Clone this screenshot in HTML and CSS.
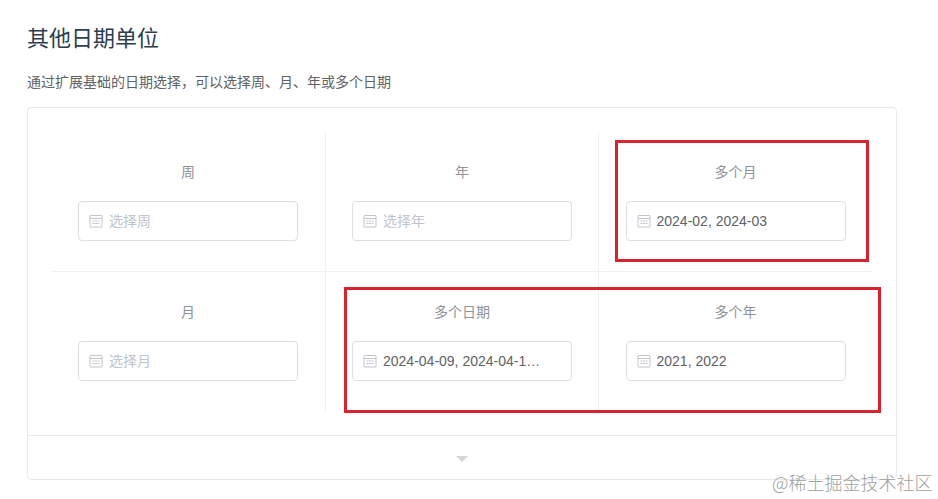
FILE: index.html
```html
<!DOCTYPE html>
<html lang="zh-CN">
<head>
<meta charset="utf-8">
<title>其他日期单位</title>
<link rel="stylesheet" href="styles.css">
</head>
<body>
<svg class="defs" width="0" height="0" aria-hidden="true">
  <symbol id="cal" viewBox="0 0 14 14">
    <path d="M1.5 1.5h11a.5.5 0 0 1 .5.5v10.5a.5.5 0 0 1-.5.5h-11a.5.5 0 0 1-.5-.5V2a.5.5 0 0 1 .5-.5z" fill="none" stroke="currentColor"/>
    <path d="M1 4.500h12" fill="none" stroke="currentColor"/>
    <path d="M3.500 7h7M3.500 9.500h7" fill="none" stroke="currentColor" stroke-dasharray="2 .6"/>
  </symbol>
</svg>
<main class="page">
  <h2 class="title">其他日期单位</h2>
  <p class="desc">通过扩展基础的日期选择，可以选择周、月、年或多个日期</p>
  <section class="card">
    <div class="grid">
      <div class="cell cell-first cell-r cell-b">
        <span class="label">周</span>
        <div class="input"><svg class="icon"><use href="#cal"/></svg><span class="ph">选择周</span></div>
      </div>
      <div class="cell cell-r cell-b">
        <span class="label">年</span>
        <div class="input"><svg class="icon"><use href="#cal"/></svg><span class="ph">选择年</span></div>
      </div>
      <div class="cell cell-b">
        <span class="label">多个月</span>
        <div class="input"><svg class="icon"><use href="#cal"/></svg><span class="val">2024-02, 2024-03</span></div>
      </div>
      <div class="cell cell-first cell-r">
        <span class="label">月</span>
        <div class="input"><svg class="icon"><use href="#cal"/></svg><span class="ph">选择月</span></div>
      </div>
      <div class="cell cell-r">
        <span class="label">多个日期</span>
        <div class="input"><svg class="icon"><use href="#cal"/></svg><span class="val">2024-04-09, 2024-04-10, 2024-04-11</span></div>
      </div>
      <div class="cell">
        <span class="label">多个年</span>
        <div class="input"><svg class="icon"><use href="#cal"/></svg><span class="val">2021, 2022</span></div>
      </div>
    </div>
    <div class="foot"><span class="caret"></span></div>
  </section>
</main>
<div class="mark mark-one"></div>
<div class="mark mark-two"></div>
<div class="watermark">@稀土掘金技术社区</div>
</body>
</html>
```
FILE: styles.css
```css
* { box-sizing: border-box; }
html, body { margin: 0; padding: 0; }
body {
  position: relative;
  width: 938px;
  height: 499px;
  overflow: hidden;
  background: #fff;
  font-family: "Liberation Sans", "Noto Sans CJK SC", sans-serif;
}
.defs { position: absolute; }
.page { padding: 24px 41px 0 27px; }
.title {
  margin: 0;
  font-size: 22px;
  line-height: 30px;
  font-weight: 400;
  color: #2c3e50;
}
.desc {
  margin: 17px 0 0;
  font-size: 14px;
  line-height: 22px;
  color: #606266;
}
.card {
  margin-top: 14px;
  height: 373px;
  border: 1px solid #e9e9eb;
  border-radius: 4px;
  display: flex;
  flex-direction: column;
}
.grid {
  margin: 24px 24px 0;
  display: grid;
  grid-template-columns: 274px 273px 1fr;
  grid-template-rows: 140px 140px;
}
.cell {
  padding-top: 30px;
  display: flex;
  flex-direction: column;
  align-items: center;
}
.cell-first { padding-right: 1px; }
.cell-r { border-right: 1px solid #f1f1f3; }
.cell-b { border-bottom: 1px solid #f1f1f3; }
.label {
  font-size: 14px;
  line-height: 20px;
  color: #909399;
  margin-bottom: 19px;
}
.input {
  width: 220px;
  height: 40px;
  border: 1px solid #dcdfe6;
  border-radius: 4px;
  padding: 0 30px 0 10px;
  display: flex;
  align-items: center;
  gap: 6px;
  font-size: 14px;
}
.icon {
  flex: none;
  width: 14px;
  height: 14px;
  color: #c0c4cc;
}
.ph { color: #c0c4cc; margin-bottom: 2px; }
.val {
  color: #606266;
  min-width: 0;
  overflow: hidden;
  white-space: nowrap;
  text-overflow: ellipsis;
}
.foot {
  margin-top: auto;
  height: 44px;
  border-top: 1px solid #e9e9eb;
  display: flex;
  align-items: center;
  justify-content: center;
}
.caret {
  width: 0;
  height: 0;
  border-left: 6px solid transparent;
  border-right: 6px solid transparent;
  border-top: 6px solid #d3d4d6;
  margin-top: 2px;
}
.mark {
  position: absolute;
  border: 3px solid #d9232e;
}
.mark-one { left: 615px; top: 140px; width: 254px; height: 122px; }
.mark-two { left: 344px; top: 287px; width: 537px; height: 126px; }
.watermark {
  position: absolute;
  left: 772px;
  top: 470px;
  font-size: 18px;
  line-height: 24px;
  color: #a0a0a0;
  white-space: nowrap;
  font-family: "Noto Sans CJK SC", sans-serif;
  font-weight: 300;
}
```
